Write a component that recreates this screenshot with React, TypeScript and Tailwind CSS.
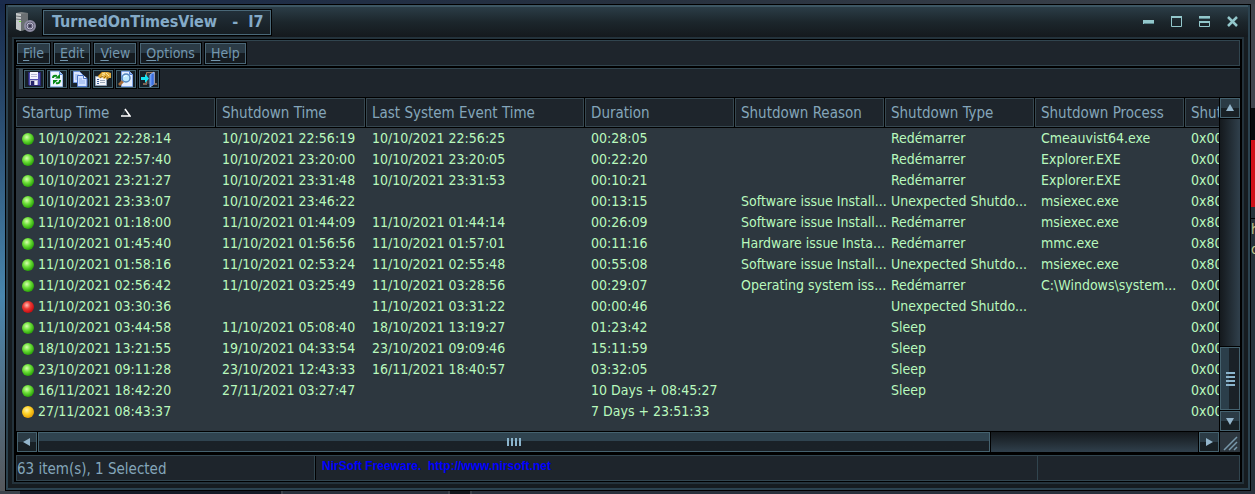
import type { ReactNode } from "react";

type Status = "on" | "crash" | "current";

type Entry = {
  status: Status;
  cells: string[];
};

const columns = [
  { label: "Startup Time", width: "w-[200px]" },
  { label: "Shutdown Time", width: "w-[150px]" },
  { label: "Last System Event Time", width: "w-[219px]" },
  { label: "Duration", width: "w-[150px]" },
  { label: "Shutdown Reason", width: "w-[150px]" },
  { label: "Shutdown Type", width: "w-[150px]" },
  { label: "Shutdown Process", width: "w-[150px]" },
  { label: "Shut", width: "w-[50px]" },
];

const entries: Entry[] = [
  { status: "on", cells: ["10/10/2021 22:28:14", "10/10/2021 22:56:19", "10/10/2021 22:56:25", "00:28:05", "", "Redémarrer", "Cmeauvist64.exe", "0x00"] },
  { status: "on", cells: ["10/10/2021 22:57:40", "10/10/2021 23:20:00", "10/10/2021 23:20:05", "00:22:20", "", "Redémarrer", "Explorer.EXE", "0x00"] },
  { status: "on", cells: ["10/10/2021 23:21:27", "10/10/2021 23:31:48", "10/10/2021 23:31:53", "00:10:21", "", "Redémarrer", "Explorer.EXE", "0x00"] },
  { status: "on", cells: ["10/10/2021 23:33:07", "10/10/2021 23:46:22", "", "00:13:15", "Software issue Install...", "Unexpected Shutdo...", "msiexec.exe", "0x80"] },
  { status: "on", cells: ["11/10/2021 01:18:00", "11/10/2021 01:44:09", "11/10/2021 01:44:14", "00:26:09", "Software issue Install...", "Redémarrer", "msiexec.exe", "0x80"] },
  { status: "on", cells: ["11/10/2021 01:45:40", "11/10/2021 01:56:56", "11/10/2021 01:57:01", "00:11:16", "Hardware issue Insta...", "Redémarrer", "mmc.exe", "0x80"] },
  { status: "on", cells: ["11/10/2021 01:58:16", "11/10/2021 02:53:24", "11/10/2021 02:55:48", "00:55:08", "Software issue Install...", "Unexpected Shutdo...", "msiexec.exe", "0x80"] },
  { status: "on", cells: ["11/10/2021 02:56:42", "11/10/2021 03:25:49", "11/10/2021 03:28:56", "00:29:07", "Operating system iss...", "Redémarrer", "C:\\Windows\\system...", "0x00"] },
  { status: "crash", cells: ["11/10/2021 03:30:36", "", "11/10/2021 03:31:22", "00:00:46", "", "Unexpected Shutdo...", "", "0x00"] },
  { status: "on", cells: ["11/10/2021 03:44:58", "11/10/2021 05:08:40", "18/10/2021 13:19:27", "01:23:42", "", "Sleep", "", "0x00"] },
  { status: "on", cells: ["18/10/2021 13:21:55", "19/10/2021 04:33:54", "23/10/2021 09:09:46", "15:11:59", "", "Sleep", "", "0x00"] },
  { status: "on", cells: ["23/10/2021 09:11:28", "23/10/2021 12:43:33", "16/11/2021 18:40:57", "03:32:05", "", "Sleep", "", "0x00"] },
  { status: "on", cells: ["16/11/2021 18:42:20", "27/11/2021 03:27:47", "", "10 Days + 08:45:27", "", "Sleep", "", "0x00"] },
  { status: "current", cells: ["27/11/2021 08:43:37", "", "", "7 Days + 23:51:33", "", "", "", "0x00"] },
];

const menus = ["File", "Edit", "View", "Options", "Help"];

const ballColors: Record<Status, string> = {
  on: "bg-[radial-gradient(circle_at_40%_35%,#d8ffb0_0%,#6fe03a_35%,#2fa80c_70%,#1c6a0a_100%)]",
  crash: "bg-[radial-gradient(circle_at_40%_35%,#ffc0b8_0%,#ee3a34_35%,#c80f14_70%,#6e1014_100%)]",
  current: "bg-[radial-gradient(circle_at_40%_35%,#fff3b0_0%,#ffd42a_35%,#e8a408_70%,#86600c_100%)]",
};

function AppIcon() {
  return (
    <svg width="20" height="20" viewBox="0 0 20 20" aria-hidden="true">
      <path d="M0 1l5-1 7 1v16l-8 2-4-2z" fill="#7f8486" />
      <path d="M0 1l5 1v17l-5-2z" fill="#c3c7c8" />
      <path d="M5 2l7-1v16l-7 2z" fill="#6b7073" />
      <path d="M0 4l5 .6M0 7l5 .6" stroke="#6a6f72" />
      <rect x="3" y="9" width="2" height="1" fill="#6fe03a" />
      <circle cx="14" cy="14" r="5" fill="#55536a" stroke="#8d8ba2" strokeWidth="2" />
      <circle cx="14" cy="14" r="3" fill="#5f5d78" stroke="#c2c0d4" />
      <circle cx="14" cy="14" r="1" fill="#2c2a3a" />
    </svg>
  );
}

function SaveIcon() {
  return (
    <svg width="16" height="16" viewBox="0 0 16 16" shapeRendering="crispEdges">
      <path d="M2 1h12v13H3l-1-1z" fill="#5451b4" stroke="#29276f" />
      <rect x="4" y="1" width="8" height="7" fill="#f4f4ff" />
      <path d="M5 3h6M5 5h6" stroke="#b8b8d8" />
      <rect x="4" y="9" width="8" height="5" fill="#b9b9cf" />
      <rect x="5" y="10" width="3" height="4" fill="#26246a" />
      <rect x="9" y="10" width="2" height="4" fill="#f4f4ff" />
    </svg>
  );
}

function RefreshIcon() {
  return (
    <svg width="16" height="16" viewBox="0 0 16 16">
      <path d="M1.500 .5h9l3 3v12h-12z" fill="#eef6ff" stroke="#9dbbe8" />
      <path d="M10.500 .5v3h3" fill="#9cc4fa" stroke="#5d88d0" />
      <path d="M4 7q0-3 4-2" fill="none" stroke="#078a16" strokeWidth="2" />
      <path d="M6 7.500h5V3z" fill="#078a16" />
      <path d="M11 9q0 4-4 3" fill="none" stroke="#078a16" strokeWidth="2" />
      <path d="M9 9H4v4.500z" fill="#078a16" />
    </svg>
  );
}

function CopyIcon() {
  return (
    <svg width="16" height="16" viewBox="0 0 16 16">
      <path d="M1.500 .5h6l3 3v8h-9z" fill="#dce8ff" stroke="#6d93dc" />
      <path d="M3 4h4M3 6h5M3 8h5" stroke="#8eaeea" />
      <path d="M5.500 4.500h6l3.500 3v8H5.500z" fill="#d3e2ff" stroke="#4d77cb" />
      <path d="M11.500 4.500v3H15" fill="#fff" stroke="#4d77cb" />
      <path d="M7 8h3M7 10h6M7 12h6" stroke="#8eaeea" />
    </svg>
  );
}

function PropertiesIcon() {
  return (
    <svg width="18" height="16" viewBox="0 0 18 16">
      <path d="M1.500 5.500h11v9h-11z" fill="#f2f4f8" stroke="#8fa2b8" />
      <path d="M3 8.500h2M3 10.500h2M3 12.500h2" stroke="#3c5d9a" />
      <path d="M6 9.500h5M6 11.500h5" stroke="#9aa7b8" />
      <path d="M4 5l4-4h6l3 1v5h-2l-2 2-1-2-2 1-2-2-3 1z" fill="#e0ac3c" />
      <path d="M4 5l4-4M6 7l3-2M10 7l2-2M13 8l1-2" stroke="#916310" />
      <path d="M8 3l3-1M12 2l3 3M8 5l3-2" stroke="#fae6a0" />
    </svg>
  );
}

function FindIcon() {
  return (
    <svg width="16" height="16" viewBox="0 0 16 16">
      <path d="M3.500 .5h8l3 3v12h-11z" fill="#e4eeff" stroke="#83a7e8" />
      <path d="M11.500 .5v3h3" fill="#8fb4f2" stroke="#5580ce" />
      <path d="M5 10l-4 4" stroke="#a86c38" strokeWidth="3" />
      <circle cx="8" cy="7" r="4" fill="#bfeaff" stroke="#5485bd" strokeWidth="1.500" />
      <path d="M6 6q1-2 3-1" stroke="#fff" fill="none" />
    </svg>
  );
}

function ExitIcon() {
  return (
    <svg width="18" height="16" viewBox="0 0 18 16">
      <path d="M6.500 13V1.500h8V13" fill="#303c48" stroke="#a07d60" />
      <path d="M3 13h4M14 13h3" stroke="#7d6454" strokeWidth="2" />
      <path d="M10 4l4-3v12l-4 3z" fill="#4d83ef" stroke="#8fb4f5" />
      <path d="M13 3v11" stroke="#2e5cc8" />
      <path d="M1 6h4V3l4 4.500L5 12V9H1z" fill="#14e4f4" />
    </svg>
  );
}

const tools: { name: string; icon: ReactNode }[] = [
  { name: "Save Selected Items", icon: <SaveIcon /> },
  { name: "Refresh", icon: <RefreshIcon /> },
  { name: "Copy Selected Items", icon: <CopyIcon /> },
  { name: "Properties", icon: <PropertiesIcon /> },
  { name: "Find", icon: <FindIcon /> },
  { name: "Exit", icon: <ExitIcon /> },
];

function TitleBar() {
  return (
    <header className="flex h-8 items-center border-t-2 border-[#3d5663] bg-linear-to-b from-[#2b3d47] via-[#1c262c] to-[#14191d] pl-2 pr-[9px]">
      <AppIcon />
      <h1 className="ml-[7px] flex h-[25px] items-center whitespace-pre border border-[#4a6878] bg-linear-to-b from-[#22303a] to-[#161d22] pl-2 pr-1.5 text-[16px] font-bold leading-5 text-[#84abc8] outline outline-black">
        {"TurnedOnTimesView   -  I7"}
      </h1>
      <div className="ml-auto flex items-center gap-4 text-[#93c7cb]">
        <button aria-label="Minimize">
          <svg width="12" height="12" viewBox="0 0 12 12" className="block">
            <path d="M0 4h11v4H0z" fill="currentColor" />
            <path d="M1 7.500h10" stroke="#5c8990" />
          </svg>
        </button>
        <button aria-label="Maximize">
          <svg width="12" height="12" viewBox="0 0 12 12" className="block">
            <path d="M.5 .5h10v10H.5z" fill="none" stroke="currentColor" />
            <path d="M0 1h11" stroke="currentColor" strokeWidth="2" />
          </svg>
        </button>
        <button aria-label="Roll up">
          <svg width="12" height="12" viewBox="0 0 12 12" className="block">
            <path d="M.5 5v5.500h10V5" fill="none" stroke="currentColor" />
            <path d="M0 1h11M0 6h11" stroke="currentColor" strokeWidth="2" />
            <path d="M0 2.500h11" stroke="#5c8990" />
          </svg>
        </button>
        <button aria-label="Close">
          <svg width="12" height="12" viewBox="0 0 12 12" className="block">
            <path d="M1 1l9 9M10 1L1 10" stroke="currentColor" strokeWidth="2.500" />
          </svg>
        </button>
      </div>
    </header>
  );
}

function MenuBar() {
  return (
    <nav className="flex h-[26px] items-center gap-1 border border-[#31454f] bg-[#1e252c]">
      {menus.map((menu) => (
        <button
          key={menu}
          className="h-[21px] border border-[#4a6676] bg-linear-to-b from-[#2b3b46] from-50% to-[#151b20] to-50% px-[5px] text-[14px] leading-[19px] text-[#7497ae] outline outline-black"
        >
          <span className="underline underline-offset-2">{menu[0]}</span>
          {menu.slice(1)}
        </button>
      ))}
    </nav>
  );
}

function ToolBar() {
  return (
    <div className="flex h-[29px] items-start border-t border-[#31454f] bg-[#1e252c] pl-[3px]" role="toolbar">
      <div className="h-5 w-1 bg-[#3c4c57]" />
      <div className="ml-px flex gap-[3px] pt-px">
        {tools.map((tool) => (
          <button
            key={tool.name}
            aria-label={tool.name}
            className="flex h-[18px] w-5 items-center justify-center border border-[#40606d] bg-[#172129] outline outline-black"
          >
            {tool.icon}
          </button>
        ))}
      </div>
    </div>
  );
}

function EventTable() {
  return (
    <div className="min-w-0 flex-1 overflow-hidden bg-[#2d373f]">
      <table className="w-[1219px] table-fixed border-separate border-spacing-0">
        <thead>
          <tr className="h-[30px]">
            {columns.map((col) => (
              <th
                key={col.label}
                className={`${col.width} border-b border-r border-black bg-[#1e252c] p-0 text-left font-normal`}
              >
                <div className="flex h-[29px] items-center whitespace-nowrap border border-[#364750] pl-[5px] text-[15px] leading-5 text-[#84a5ba]">
                  {col.label}
                  {col.label === "Startup Time" && (
                    <svg width="10" height="9" viewBox="0 0 10 9" className="ml-3">
                      <path d="M1 8L4.500 1" stroke="#46525a" />
                      <path d="M4 1l5 7H0" fill="none" stroke="#fff" strokeWidth="1.500" />
                    </svg>
                  )}
                </div>
              </th>
            ))}
          </tr>
        </thead>
        <tbody>
          {entries.map((entry) => (
            <tr key={entry.cells[0]} className="h-[21px]">
              {entry.cells.map((cell, i) => (
                <td
                  key={i}
                  className="whitespace-nowrap py-0 pl-1.5 pr-0 text-[14px] leading-[21px] text-[#b9f9bd]"
                >
                  {i === 0 ? (
                    <span className="flex items-center gap-1">
                      <span className={`size-3 rounded-full ${ballColors[entry.status]}`} />
                      {cell}
                    </span>
                  ) : (
                    cell
                  )}
                </td>
              ))}
            </tr>
          ))}
        </tbody>
      </table>
    </div>
  );
}

function ArrowButton({ label, path }: { label: string; path: string }) {
  return (
    <button
      aria-label={label}
      className="flex size-5 shrink-0 items-center justify-center border border-[#45626f] bg-linear-to-b from-[#2b3b45] from-50% to-[#182025] to-50% outline outline-black"
    >
      <svg width="10" height="10" viewBox="0 0 10 10">
        <path d={path} fill="#94b6cc" />
      </svg>
    </button>
  );
}

function VerticalScroll() {
  return (
    <div className="flex w-[21px] flex-col gap-px border-l border-black">
      <ArrowButton label="Scroll up" path="M5 1L9 8H1z" />
      <div className="flex flex-1 flex-col bg-linear-to-r from-[#14191d] to-[#30404c]">
        <div className="flex-[79]" />
        <div className="flex flex-[21] items-center justify-center border border-[#45626f] bg-linear-to-r from-[#2b3e4a] from-45% to-[#1a2127] to-45% outline outline-black">
          <div className="flex flex-col gap-0.5">
            <div className="h-0.5 w-[9px] bg-[#8bb4cc]" />
            <div className="h-0.5 w-[9px] bg-[#8bb4cc]" />
            <div className="h-0.5 w-[9px] bg-[#8bb4cc]" />
            <div className="h-0.5 w-[9px] bg-[#8bb4cc]" />
          </div>
        </div>
      </div>
      <ArrowButton label="Scroll down" path="M5 9L9 2H1z" />
    </div>
  );
}

function HorizontalScroll() {
  return (
    <div className="flex border-t border-black bg-[#2d373f]">
      <div className="flex flex-1 gap-px pl-px">
        <ArrowButton label="Scroll left" path="M1 5L8 1v8z" />
        <div className="flex flex-1 bg-linear-to-b from-[#14191d] to-[#30404c]">
          <div className="flex flex-[82] border border-[#45626f] outline outline-black">
            <div className="flex flex-1 items-center justify-center bg-linear-to-b from-[#2f434f] from-45% to-[#1a2127] to-45%">
              <div className="flex gap-0.5">
                <div className="h-2 w-0.5 bg-[#8bb4cc]" />
                <div className="h-2 w-0.5 bg-[#8bb4cc]" />
                <div className="h-2 w-0.5 bg-[#8bb4cc]" />
                <div className="h-2 w-0.5 bg-[#8bb4cc]" />
              </div>
            </div>
          </div>
          <div className="flex-[18]" />
        </div>
        <ArrowButton label="Scroll right" path="M9 5L2 1v8z" />
      </div>
      <svg width="21" height="20" viewBox="0 0 21 20" className="shrink-0">
        <path d="M5 18L18 5M10 18l8-8M15 18l3-3" stroke="#7898ab" strokeWidth="1.500" />
      </svg>
    </div>
  );
}

function StatusBar() {
  return (
    <footer className="flex h-[26px] border border-[#31454f] bg-[#1e252c] outline outline-black">
      <div className="w-[298px] shrink-0 border-r border-[#31454f] text-[15px] leading-[26px] text-[#84a5ba]">
        63 item(s), 1 Selected
      </div>
      <a
        href="http://www.nirsoft.net"
        className="flex-1 whitespace-pre border-l border-black pl-1.5 font-['Liberation_Sans',sans-serif] text-[12px] font-bold leading-5 text-[#0000ff]"
      >
        {"NirSoft Freeware.  http://www.nirsoft.net"}
      </a>
      <div className="w-[202px] shrink-0 border-l border-[#31454f]" />
    </footer>
  );
}

export default function App() {
  return (
    <div className="flex h-screen min-h-[480px] flex-col overflow-hidden bg-[#222b38] font-['DejaVu_Sans_Condensed','Noto_Sans',sans-serif]">
      <div className="h-1 shrink-0 bg-linear-to-r from-[#1a2b4c] via-[#26303e] to-[#3d434b]" />
      <div className="flex min-h-0 flex-1">
        <div className="w-[5px] bg-linear-to-b from-[#182a4a] via-[#4886ad] via-60% to-[#55585c]" />
        <div className="flex min-w-0 flex-1 flex-col border border-black bg-[#161c20]">
          <div className="flex min-h-0 flex-1 flex-col border-x-2 border-b-2 border-[#2b424f]">
            <TitleBar />
            <div className="mx-1 mb-1 flex min-h-0 flex-1 flex-col border-2 border-[#24333c] bg-black px-0.5 py-px">
              <MenuBar />
              <div className="h-0.5 shrink-0" />
              <ToolBar />
              <div className="flex min-h-0 flex-1 border-t border-black">
                <EventTable />
                <VerticalScroll />
              </div>
              <HorizontalScroll />
              <div className="h-[3px] shrink-0" />
              <StatusBar />
            </div>
          </div>
        </div>
        <div className="flex w-1 flex-col overflow-hidden bg-[#28323a] text-[14px] leading-5 text-[#c9c98a]">
          <div className="h-[104px] bg-[#41464e]" />
          <div className="h-8 bg-[#080a0c]" />
          <div className="h-[67px] bg-[#d01018]" />
          <div className="h-3 border-b border-black" />
          <div>h</div>
          <div>on</div>
        </div>
      </div>
      <div className="flex h-[3px] shrink-0 gap-0.5 bg-[#3b434c]">
        <div className="ml-5 w-[261px] bg-[#141a26]" />
        <div className="w-[165px] bg-[#29323d]" />
        <div className="w-5 bg-[#11161c]" />
        <div className="flex-1 bg-[#29323d]" />
      </div>
    </div>
  );
}
